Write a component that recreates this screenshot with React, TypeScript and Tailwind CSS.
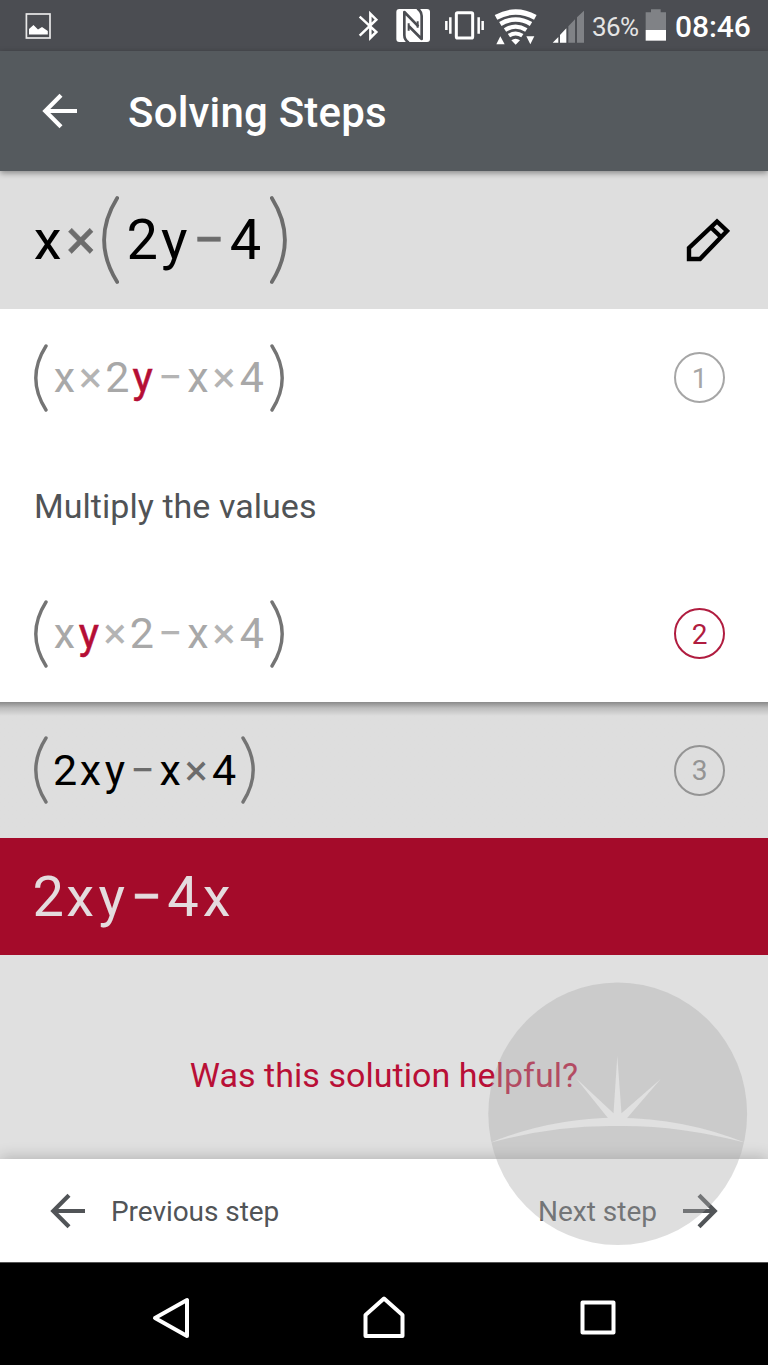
import React from "react";

type Size = "lg" | "sm";

const cellWidths: Record<Size, Record<string, string>> = {
  lg: { x: "w-[31.5px]", y: "w-[31.5px]", "2": "w-[32.5px]", "4": "w-[36px]", "×": "w-[35px]", "−": "w-[37.5px]" },
  sm: { x: "w-[24.6px]", y: "w-[24.6px]", "2": "w-[26px]", "4": "w-[28px]", "×": "w-[27.7px]", "−": "w-[30.7px]" },
};

function Paren({ size, side }: { size: Size; side: "left" | "right" }) {
  const flip = side === "right" ? "-scale-x-100" : "";
  return size === "lg" ? (
    <svg className={`h-[88px] w-[17px] shrink-0 ${flip}`} viewBox="0 0 17 88" fill="none">
      <path d="M15.2 2 Q-11 44 15.2 86" stroke="#6c6c6c" strokeWidth="3.8" strokeLinecap="round" />
    </svg>
  ) : (
    <svg className={`h-[68px] w-[14px] shrink-0 ${flip}`} viewBox="0 0 14 68" fill="none">
      <path d="M12 2 Q-8.4 34 12 66" stroke="#747474" strokeWidth="3.4" strokeLinecap="round" />
    </svg>
  );
}

function Terms({ text, size, tone, accent, operator }: { text: string; size: Size; tone: string; accent?: string; operator: string }) {
  return (
    <span className={`flex ${size === "lg" ? "text-[56px]" : "text-[43px]"} leading-none`}>
      {text.split("").map((t, i) => {
        const color = t === "×" || t === "−" ? operator : t === accent ? "text-[#b50e35] [-webkit-text-stroke:0.5px_#b50e35]" : tone;
        return (
          <span key={i} className={`flex justify-center ${cellWidths[size][t]} ${color}`}>
            {t}
          </span>
        );
      })}
    </span>
  );
}

function StepBadge({ n, className }: { n: number; className: string }) {
  return (
    <span className={`mr-[43px] flex size-[51px] items-center justify-center rounded-full border-2 pt-[2px] text-[28px] leading-none ${className}`}>
      {n}
    </span>
  );
}

function Arrow({ className, flip }: { className: string; flip?: boolean }) {
  return (
    <svg className={`h-[36px] w-[36px] shrink-0 ${className} ${flip ? "-scale-x-100" : ""}`} viewBox="0 0 36 36" fill="none" stroke="currentColor" strokeWidth="4.2">
      <path d="M35 18H4M19 2.3L3.3 18L19 33.7" />
    </svg>
  );
}

function StatusBar() {
  return (
    <div className="flex h-[51px] items-start bg-[#4b4d52] text-white">
      <svg className="mt-[13px] ml-[25px] h-[26px] w-[26px]" viewBox="0 0 26 26">
        <rect x="1.4" y="1" width="23.6" height="24" fill="none" stroke="#e8e8e8" strokeWidth="1.7" />
        <path d="M4 21.5v-5.5l4.5-4 4.5 4.5 4-2.5 5.8 4v3.5z" fill="#fff" />
      </svg>
      <svg className="mt-[9px] ml-[307px] h-[37px] w-[21px]" viewBox="54 27 63 111" fill="none" stroke="#fff" strokeWidth="7.5">
        <path d="M59 50L109 96L91 114V41L109 59L59 107" />
      </svg>
      <svg className="mt-[9px] ml-[17px] h-[37px] w-[34px]" viewBox="168 27 102 111">
        <rect x="169" y="27" width="101" height="99" rx="9" fill="#fff" />
        <g fill="none" stroke="#4b4d52" strokeWidth="8">
          <path d="M206 128Q193 119 193 105V36L235 79" strokeLinejoin="round" />
          <path d="M232 25Q245 34 245 48V117L206 78" strokeLinejoin="round" />
          <path d="M206 70V92M233 83V64" strokeWidth="6" />
        </g>
      </svg>
      <svg className="mt-[9px] ml-[14px] h-[37px] w-[41px]" viewBox="312 27 123 111" fill="none" stroke="#fff">
        <rect x="349" y="38" width="49" height="76" rx="4" strokeWidth="9" />
        <path d="M319 63V90M331 52V101M416 52V101M428 63V90" strokeWidth="7.5" />
      </svg>
      <svg className="mt-[9px] ml-[9px] h-[37px] w-[43px]" viewBox="462 27 129 111">
        <g fill="none" stroke="#fff">
          <path d="M468 52Q527 20 586 52" strokeWidth="16" />
          <path d="M481 72Q527 45 573 72" strokeWidth="14" />
          <path d="M495 90Q527 70 559 90" strokeWidth="13" />
          <path d="M507 107Q527 94 547 107" strokeWidth="12" />
        </g>
        <path d="M514 121Q527 112 540 121L527 134ZM481 109L494 133H469ZM559 109H583L571 133Z" fill="#fff" />
      </svg>
      <svg className="mt-[9px] ml-[15px] h-[37px] w-[33px]" viewBox="636 27 99 111">
        <path d="M638 128L655 111V128ZM660 105L679 85V128H660Z" fill="#fff" />
        <path d="M685 79L705 58V128H685ZM711 52L732 32V128H711Z" fill="#808286" />
      </svg>
      <span className="ml-[7px] w-[48px] pt-[14px] text-[26px] leading-[26px] tracking-[-0.6px] text-[#e4e4e4]">36%</span>
      <svg className="mt-[9px] ml-[5px] h-[37px] w-[22px]" viewBox="915 27 66 111">
        <path d="M917 37H933V28H962V37H978V90H917Z" fill="#808286" />
        <path d="M917 90H978V122H917Z" fill="#fff" />
      </svg>
      <span className="ml-[8px] pt-[12px] text-[30px] leading-[30px] font-medium tracking-[-0.1px]">08:46</span>
    </div>
  );
}

function Watermark() {
  return (
    <svg className="pointer-events-none absolute top-[982px] left-[488px] h-[264px] w-[260px]" viewBox="0 0 260 264">
      <mask id="sunrise">
        <rect width="260" height="264" fill="#fff" />
        <path d="M2.2 160.8Q62 136 129 135.7Q196 136 257.5 160.8Q190 143 129 144Q66 143 2.2 160.8Z" fill="#000" />
        <path d="M129.3 74L133.5 131.3L172.7 97L138.7 136.5V140H120.3V136.5L88 96.3L125.5 131.3Z" fill="#000" />
      </mask>
      <ellipse cx="129.7" cy="131.8" rx="129.4" ry="131.2" fill="#aaaaaa" fillOpacity="0.39" mask="url(#sunrise)" />
    </svg>
  );
}

export default function App() {
  return (
    <div className="relative flex h-[1365px] w-[768px] flex-col overflow-hidden bg-black font-['Roboto',sans-serif]">
      <StatusBar />
      <header className="z-20 flex h-[120px] items-center bg-[#555a5e] text-white shadow-[0_2px_6px_rgba(0,0,0,0.4)]">
        <Arrow className="ml-[42px]" />
        <h1 className="ml-[50px] pt-[3px] text-[42px] leading-none font-medium tracking-[0.2px]">Solving Steps</h1>
      </header>

      <section className="z-10 flex h-[138px] items-center justify-between bg-[#dedede]">
        <div className="flex items-center pl-[32px]">
          <Terms text="x×" size="lg" tone="text-black" operator="text-[#6c6c6c] [-webkit-text-stroke:0.4px_#6c6c6c]" />
          <span className="ml-[3.5px] flex items-center">
            <Paren size="lg" side="left" />
            <span className="w-[7px]" />
            <Terms text="2y−4" size="lg" tone="text-black" operator="text-[#6c6c6c] [-webkit-text-stroke:0.4px_#6c6c6c]" />
            <span className="w-[6px]" />
            <Paren size="lg" side="right" />
          </span>
        </div>
        <svg className="mr-[38px] h-[44px] w-[44px]" viewBox="0 0 44 44" fill="none" stroke="#000" strokeWidth="4.4">
          <path d="M3 41V30L31 3.5L41 13L14 41ZM25 9.5L35 19" />
        </svg>
      </section>

      <main className="flex h-[393px] flex-col bg-white">
        <div className="flex h-[137px] items-center justify-between">
          <div className="flex items-center pl-[34px]">
            <Paren size="sm" side="left" />
            <span className="w-[4px]" />
            <Terms text="x×2y−x×4" size="sm" tone="text-[#a8a8a8]" accent="y" operator="text-[#b4b4b4]" />
            <span className="w-[4px]" />
            <Paren size="sm" side="right" />
          </div>
          <StepBadge n={1} className="border-[#a6a6a6] text-[#a6a6a6]" />
        </div>
        <p className="flex h-[119px] items-center pt-[2px] pl-[34px] text-[34px] tracking-[0.05px] text-[#505356]">Multiply the values</p>
        <div className="flex h-[137px] items-center justify-between">
          <div className="flex items-center pl-[34px]">
            <Paren size="sm" side="left" />
            <span className="w-[4px]" />
            <Terms text="xy×2−x×4" size="sm" tone="text-[#a8a8a8]" accent="y" operator="text-[#b4b4b4]" />
            <span className="w-[4px]" />
            <Paren size="sm" side="right" />
          </div>
          <StepBadge n={2} className="border-[#b01c3f] text-[#b01c3f]" />
        </div>
      </main>

      <section className="flex h-[136px] items-center justify-between bg-[#dedede] bg-linear-to-b from-[#8a8a8a] via-[#bcbcbc] via-[6px] to-[#dedede] to-[14px]">
        <div className="flex items-center pl-[34px]">
          <Paren size="sm" side="left" />
          <span className="w-[4px]" />
          <Terms text="2xy−x×4" size="sm" tone="text-black" operator="text-[#6c6c6c]" />
          <span className="w-[3px]" />
          <Paren size="sm" side="right" />
        </div>
        <StepBadge n={3} className="border-[#949494] text-[#949494]" />
      </section>

      <section className="flex h-[117px] items-center bg-[#a40b2a] pl-[32px]">
        <Terms text="2xy−4x" size="lg" tone="text-[#e4dcde]" operator="text-[#e4dcde] [-webkit-text-stroke:0.4px_#e4dcde]" />
      </section>

      <section className="flex h-[204px] flex-col items-center bg-[#e0e0e0] pt-[99px]">
        <p className="text-[34px] leading-[42px] tracking-[0.05px] text-[#b90f36]">Was this solution helpful?</p>
      </section>

      <footer className="z-10 flex h-[103px] items-center justify-between bg-white text-[28px] text-[#515457] shadow-[0_-2px_14px_rgba(0,0,0,0.2)]">
        <div className="flex items-center pl-[50px]">
          <Arrow className="" />
          <span className="ml-[25px] pt-[3px] tracking-[-0.05px]">Previous step</span>
        </div>
        <div className="flex items-center pr-[50px]">
          <span className="mr-[25px] pt-[3px]">Next step</span>
          <Arrow className="" flip />
        </div>
      </footer>

      <nav className="z-10 flex h-[103px] items-center border-t border-[#555] bg-black pt-[7px]">
        <svg className="ml-[152px] h-[44px] w-[38px]" viewBox="0 0 38 44" fill="none" stroke="#fff" strokeWidth="4" strokeLinejoin="round">
          <path d="M3 22L35 4V40Z" />
        </svg>
        <svg className="ml-[173px] h-[44px] w-[42px]" viewBox="0 0 42 44" fill="none" stroke="#fff" strokeWidth="4" strokeLinejoin="round">
          <path d="M21 2.5L39.5 19V40H2.5V19Z" />
        </svg>
        <svg className="ml-[175px] h-[36px] w-[36px]" viewBox="0 0 36 36" fill="none" stroke="#fff" strokeWidth="4" strokeLinejoin="round">
          <rect x="2.5" y="2.5" width="31" height="30" />
        </svg>
      </nav>
      <div className="pointer-events-none absolute inset-0 z-20">
        <Watermark />
      </div>
    </div>
  );
}
